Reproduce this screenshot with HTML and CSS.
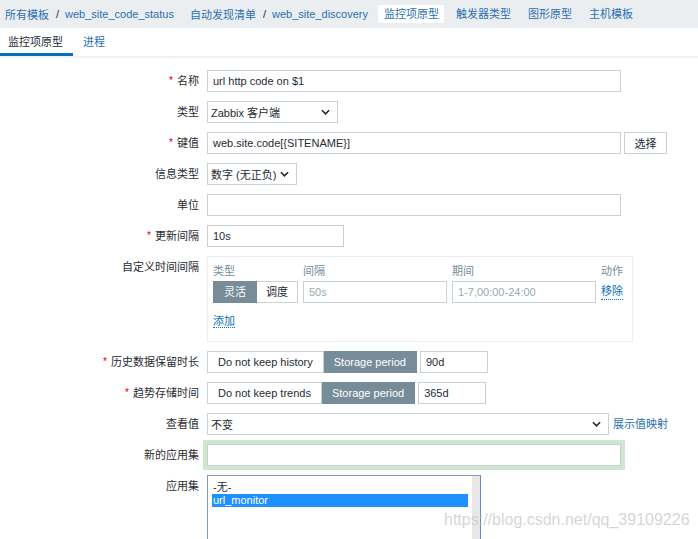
FILE: index.html
```html
<!DOCTYPE html>
<html lang="zh-CN">
<head>
<meta charset="utf-8">
<title>监控项原型</title>
<link rel="stylesheet" href="styles.css">
</head>
<body>
<div class="topnav">
  <div class="crumbs first"><a class="lnk">所有模板</a><span class="sep">/</span><a class="lnk">web_site_code_status</a></div>
  <div class="crumbs second"><a class="lnk">自动发现清单</a><span class="sep">/</span><a class="lnk">web_site_discovery</a></div>
  <span class="navitem active">监控项原型</span>
  <a class="navitem lnk">触发器类型</a>
  <a class="navitem lnk">图形原型</a>
  <a class="navitem lnk">主机模板</a>
</div>
<div class="tabs">
  <span class="tab current">监控项原型</span>
  <a class="tab lnk">进程</a>
</div>
<div class="form">
  <div class="row">
    <label class="lbl"><span class="req">*</span>名称</label>
    <div class="ctl"><div class="input w-full">url http code on $1</div></div>
  </div>
  <div class="row">
    <label class="lbl">类型</label>
    <div class="ctl"><div class="select w-type"><span>Zabbix 客户端</span><svg class="chev" viewBox="0 0 10 6" width="9" height="6"><path d="M1 1l4 4 4-4" fill="none" stroke="#1f2c33" stroke-width="1.8"/></svg></div></div>
  </div>
  <div class="row">
    <label class="lbl"><span class="req">*</span>键值</label>
    <div class="ctl"><div class="input w-full">web.site.code[{SITENAME}]</div><button class="btn">选择</button></div>
  </div>
  <div class="row">
    <label class="lbl">信息类型</label>
    <div class="ctl"><div class="select w-info"><span>数字 (无正负)</span><svg class="chev" viewBox="0 0 10 6" width="9" height="6"><path d="M1 1l4 4 4-4" fill="none" stroke="#1f2c33" stroke-width="1.8"/></svg></div></div>
  </div>
  <div class="row">
    <label class="lbl">单位</label>
    <div class="ctl"><div class="input w-full"></div></div>
  </div>
  <div class="row">
    <label class="lbl"><span class="req">*</span>更新间隔</label>
    <div class="ctl"><div class="input w-short">10s</div></div>
  </div>
  <div class="row">
    <label class="lbl">自定义时间间隔</label>
    <div class="ctl">
      <div class="intervals">
        <div class="ihead">
          <span class="c-type">类型</span><span class="c-int">间隔</span><span class="c-per">期间</span><span class="c-act">动作</span>
        </div>
        <div class="irow">
          <div class="seg c-type"><span class="sbtn on">灵活</span><span class="sbtn">调度</span></div>
          <div class="input ph c-int">50s</div>
          <div class="input ph c-per">1-7,00:00-24:00</div>
          <a class="dlink c-act">移除</a>
        </div>
        <div class="iadd"><a class="dlink">添加</a></div>
      </div>
    </div>
  </div>
  <div class="row">
    <label class="lbl"><span class="req">*</span>历史数据保留时长</label>
    <div class="ctl"><div class="seg"><span class="sbtn wide">Do not keep history</span><span class="sbtn wide on">Storage period</span></div><div class="input w-days">90d</div></div>
  </div>
  <div class="row">
    <label class="lbl"><span class="req">*</span>趋势存储时间</label>
    <div class="ctl"><div class="seg"><span class="sbtn wide">Do not keep trends</span><span class="sbtn wide on">Storage period</span></div><div class="input w-days">365d</div></div>
  </div>
  <div class="row">
    <label class="lbl">查看值</label>
    <div class="ctl"><div class="select w-view"><span>不变</span><svg class="chev" viewBox="0 0 10 6" width="9" height="6"><path d="M1 1l4 4 4-4" fill="none" stroke="#1f2c33" stroke-width="1.8"/></svg></div><a class="lnk maplink">展示值映射</a></div>
  </div>
  <div class="row">
    <label class="lbl">新的应用集</label>
    <div class="ctl"><div class="input w-full glow"></div></div>
  </div>
  <div class="row">
    <label class="lbl">应用集</label>
    <div class="ctl">
      <div class="listbox">
        <div class="items">
          <div class="opt">-无-</div>
          <div class="opt sel">url_monitor</div>
        </div>
        <div class="track"></div>
      </div>
    </div>
  </div>
</div>
<div class="watermark">https://blog.csdn.net/qq_39109226</div>
</body>
</html>
```
FILE: styles.css
```css
* { box-sizing: border-box; }
html, body { margin: 0; padding: 0; }
body {
  width: 698px;
  height: 539px;
  overflow: hidden;
  position: relative;
  background: #ffffff;
  font-family: "Liberation Sans", "Noto Sans CJK SC", sans-serif;
  font-size: 11px;
  color: #1f2c33;
}
a { text-decoration: none; cursor: pointer; }
.lnk { color: #2a6fb0; }

.topnav {
  height: 28px;
  background: #ebeef0;
  display: flex;
  align-items: center;
  padding-left: 5px;
}
.crumbs { display: flex; align-items: center; white-space: nowrap; }
.crumbs.first { margin-right: 16px; }
.crumbs.second { margin-right: 10px; }
.sep { color: #1f2c33; margin: 0 6px 0 7px; }
.navitem { line-height: 18px; white-space: nowrap; margin-right: 17px; }
.navitem.active {
  background: #ffffff;
  color: #2a6fb0;
  padding: 0 5px 0 6px;
  border-radius: 2px;
  margin-right: 12px;
}

.tabs {
  height: 30px;
  display: flex;
  align-items: stretch;
  border-bottom: 2px solid #f0f1f2;
}
.tab {
  display: flex;
  align-items: center;
  padding: 1px 10px 0 8px;
  border-bottom: 3px solid transparent;
  white-space: nowrap;
}
.tab.current { border-bottom-color: #0a6fb8; color: #1f2c33; }
.tab + .tab { padding-left: 10px; }

.form {
  padding-top: 12px;
  display: flex;
  flex-direction: column;
  gap: 9px;
}
.row {
  display: grid;
  grid-template-columns: 199px 1fr;
  column-gap: 8px;
  align-items: start;
}
.lbl {
  text-align: right;
  line-height: 22px;
  height: 22px;
  white-space: nowrap;
}
.req { color: #d40000; font-size: 10px; margin-right: 4px; position: relative; top: -1px; }
.ctl { display: flex; align-items: flex-start; }

.input {
  height: 22px;
  border: 1px solid #c8d1d6;
  background: #fff;
  padding: 0 5px;
  line-height: 20px;
  white-space: nowrap;
  overflow: hidden;
}
.input.ph { color: #9aa8b0; }
.w-full { width: 414px; }
.w-short { width: 137px; }
.w-days { width: 68px; margin-left: 3px; }
.glow { box-shadow: 0 0 0 4px #cfe6cf; }

.select {
  height: 22px;
  border: 1px solid #c8d1d6;
  background: #fff;
  padding: 0 7px 0 3px;
  display: flex;
  align-items: center;
  justify-content: space-between;
  white-space: nowrap;
}
.w-type { width: 131px; }
.w-info { width: 90px; }
.w-view { width: 402px; }
.chev { flex: none; margin-left: 4px; }
.maplink { line-height: 22px; margin-left: 4px; white-space: nowrap; }

.btn {
  height: 22px;
  width: 43px;
  margin-left: 3px;
  border: 1px solid #c8d1d6;
  background: #fff;
  font: inherit;
  color: #1f2c33;
  padding: 0;
}

.intervals {
  width: 426px;
  height: 86px;
  border: 1px solid #ebeef0;
  padding: 0 9px 0 5px;
}
.ihead, .irow { display: flex; gap: 5px; align-items: center; white-space: nowrap; }
.ihead { height: 24px; color: #768d99; padding-top: 1px; }
.c-type { width: 85px; flex: none; }
.c-int { width: 144px; flex: none; }
.c-per { width: 144px; flex: none; }
.c-act { flex: none; }
.iadd { padding-top: 11px; line-height: 15px; }
.dlink {
  color: #0a6fb8;
  border-bottom: 1px dotted #0a6fb8;
  line-height: 15px;
}

.seg { display: flex; height: 22px; }
.sbtn {
  height: 22px;
  line-height: 20px;
  border: 1px solid #c8d1d6;
  background: #fff;
  padding: 0 10px;
  white-space: nowrap;
  text-align: center;
}
.seg .sbtn + .sbtn { border-left: none; }
.sbtn.on { background: #768d99; border-color: #768d99; color: #fff; }
.c-type .sbtn:first-child { width: 44px; padding: 0; }
.c-type .sbtn:last-child { width: 41px; padding: 0; }

.listbox {
  width: 274px;
  height: 90px;
  border: 1px solid #7f9db9;
  border-right-color: #5b8fc0;
  display: flex;
  background: #fff;
}
.items { flex: 1; padding: 5px 4px 0 4px; }
.opt { line-height: 13px; padding-left: 1px; }
.opt.sel { background: #1e90ff; color: #fff; }
.track { width: 8px; background: #e8e8e8; }

.watermark {
  position: absolute;
  left: 444px;
  top: 511px;
  font-size: 16px;
  color: rgba(200, 200, 200, 0.75);
  white-space: nowrap;
}
```
